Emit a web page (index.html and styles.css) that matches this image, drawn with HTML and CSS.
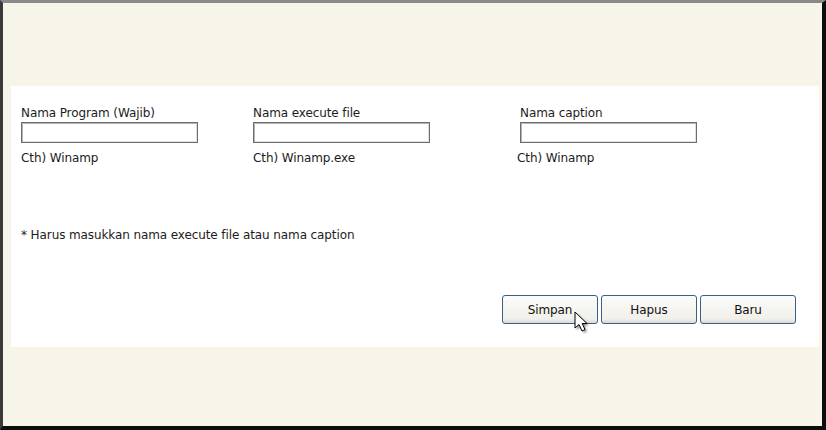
FILE: index.html
```html
<!DOCTYPE html>
<html>
<head>
<meta charset="utf-8">
<link rel="stylesheet" href="styles.css">
</head>
<body>
<div class="frame">
  <div class="panel">
    <div class="fields">
      <div class="field col1">
        <div class="label">Nama Program (Wajib)</div>
        <input class="text" type="text">
        <div class="hint">Cth) Winamp</div>
      </div>
      <div class="field col2">
        <div class="label">Nama execute file</div>
        <input class="text" type="text">
        <div class="hint">Cth) Winamp.exe</div>
      </div>
      <div class="field col3">
        <div class="label">Nama caption</div>
        <input class="text" type="text">
        <div class="hint shift">Cth) Winamp</div>
      </div>
    </div>
    <div class="note">* Harus masukkan nama execute file atau nama caption</div>
    <div class="buttons">
      <button class="btn">Simpan</button>
      <button class="btn">Hapus</button>
      <button class="btn">Baru</button>
    </div>
  </div>
  <svg class="cursor" width="22" height="26" viewBox="0 0 22 26">
    <defs>
      <filter id="blur" x="-50%" y="-50%" width="200%" height="200%"><feGaussianBlur stdDeviation="1.3"/></filter>
    </defs>
    <path d="M3 3 L3 19 L7 15.5 L10 22 L13 20.5 L10.2 14.5 L15 14.5 Z" fill="#000" opacity="0.45" filter="url(#blur)"/>
    <path d="M1 1 L1 17 L5 13.5 L8 20 L11 18.5 L8.2 12.5 L13 12.5 Z" fill="#fff" stroke="#000" stroke-width="1" stroke-linejoin="miter"/>
  </svg>
</div>
</body>
</html>
```
FILE: styles.css
```css
html, body {
  margin: 0;
  padding: 0;
  background: #111;
}
.frame {
  position: relative;
  box-sizing: border-box;
  width: 826px;
  height: 430px;
  background: #f7f5ea;
  border-top: 3px solid #8a8a8a;
  border-left: 3px solid #3a3a3a;
  border-right: 4px solid #0d0d0d;
  border-bottom: 4px solid #0d0d0d;
  padding-top: 83px;
  font-family: "DejaVu Sans", Verdana, sans-serif;
  font-size: 12px;
  letter-spacing: -0.1px;
  color: #1c1c1c;
}
.panel {
  margin-left: 8px;
  margin-right: 3px;
  height: 261px;
  background: #fff;
  box-sizing: border-box;
  padding: 19px 23px 0 10px;
  display: flex;
  flex-direction: column;
}
.fields {
  display: flex;
}
.field {
  display: flex;
  flex-direction: column;
  align-items: flex-start;
}
.col1 { width: 232px; }
.col2 { width: 267px; }
.label {
  line-height: 16px;
  height: 16px;
}
.text {
  margin: 1px 0 0 0;
  box-sizing: border-box;
  width: 177px;
  height: 21px;
  border: 1px solid #6e6e6e;
  box-shadow: inset 1px 1px 0 #b4b4b4, inset -1px -1px 0 #e0e0e0;
  background: #fff;
  padding: 0;
}
.hint {
  margin-top: 7px;
  line-height: 16px;
}
.shift {
  margin-left: -3px;
}
.note {
  margin-top: 61px;
  line-height: 16px;
}
.buttons {
  display: flex;
  justify-content: flex-end;
  gap: 3px;
  margin-top: 52px;
}
.btn {
  box-sizing: border-box;
  width: 96px;
  height: 29px;
  border: 1px solid #3d5f86;
  border-radius: 3px;
  background: linear-gradient(#fbfbf9, #f1f0ea 85%, #d9d8d0);
  font-family: "DejaVu Sans", Verdana, sans-serif;
  font-size: 12px;
  letter-spacing: -0.1px;
  color: #111;
  padding: 0;
  margin: 0;
}
.cursor {
  position: absolute;
  left: 571px;
  top: 308px;
}
```
